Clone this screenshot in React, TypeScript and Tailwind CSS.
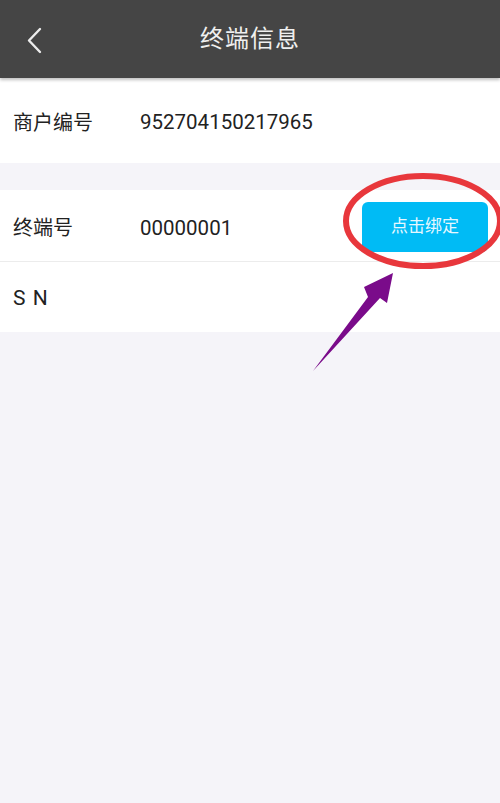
import React from "react";

export default function App() {
  const font = { fontFamily: 'Roboto, "Noto Sans CJK SC", "Noto Sans", sans-serif' };
  return (
    <div className="relative w-[500px] h-[803px] bg-[#f5f4f9] overflow-hidden" style={font}>
      <div className="relative z-10 h-[78px] bg-[#454545] flex items-center justify-center shadow-[0_2px_3px_rgba(0,0,0,0.25)]">
        <svg className="absolute left-[25px] top-[27px]" width="18" height="27" viewBox="0 0 18 27">
          <path d="M15 2 L4 13.5 L15 25" fill="none" stroke="#ececec" strokeWidth="2.4" strokeLinecap="round" strokeLinejoin="round" />
        </svg>
        <span className="text-[24px] text-[#efefef] tracking-[1px]">终端信息</span>
      </div>
      <div className="h-[85px] bg-white flex items-center pt-[4px] px-[13px] text-[20px] text-[#222]">
        <span className="w-[127px]">商户编号</span>
        <span className="text-[20.5px]">952704150217965</span>
      </div>
      <div className="h-[27px]" />
      <div className="h-[72px] bg-white flex items-center pl-[13px] pr-[12px] text-[20px] text-[#222] border-b border-[#ececec]">
        <span className="w-[127px] mt-[5px]">终端号</span>
        <span className="text-[20.5px] mt-[5px]">00000001</span>
        <div className="ml-auto mt-[2px] w-[126px] h-[50px] rounded-[6px] bg-[#00bbf5] flex items-center justify-center text-[17px] text-[#e6f7ff]">
          点击绑定
        </div>
      </div>
      <div className="h-[70px] bg-white flex items-center pt-[4px] px-[13px] text-[21px] text-[#222]">
        <span className="tracking-[1px]">S N</span>
      </div>
      <svg className="absolute left-0 top-0 pointer-events-none" width="500" height="803" viewBox="0 0 500 803">
        <ellipse cx="423" cy="221" rx="77" ry="45" fill="none" stroke="#e8373c" strokeWidth="6" />
        <polygon points="313,371 368,297 364,287 393,273 387,303 380,298" fill="#7a0b8a" />
      </svg>
    </div>
  );
}
